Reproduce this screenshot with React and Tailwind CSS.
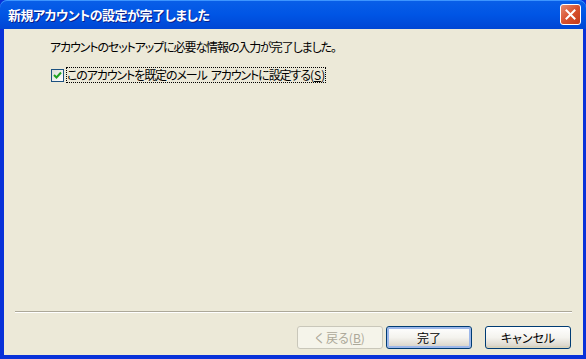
import React from "react";

const font = { fontFamily: '"Noto Sans CJK JP", "Liberation Sans", sans-serif', fontFeatureSettings: '"palt"' };

function XpButton({ children, disabled, isDefault, className = "" }) {
  if (disabled) {
    return (
      <div className={"h-[23px] w-[86px] rounded-[3px] border border-[#c9c7ba] bg-[#f5f4ea] flex items-center justify-center text-[12px] text-[#aca899] " + className}>
        {children}
      </div>
    );
  }
  return (
    <div className={"h-[23px] w-[86px] rounded-[3px] border border-[#003c74] flex items-center justify-center text-[12px] text-black bg-gradient-to-b from-[#ffffff] via-[#f4f3ee] to-[#d6d0c5] " + (isDefault ? "shadow-[inset_0_0_0_2px_#9cb7ea] " : "shadow-[inset_0_-2px_0_#d8d2bd] ") + className}>
      {children}
    </div>
  );
}

export default function App() {
  return (
    <div className="w-[586px] h-[359px] flex flex-col bg-[#0831d9] overflow-hidden" style={font}>
      <div className="h-[29px] shrink-0 flex items-center justify-between pl-[8px] pr-[5px] bg-gradient-to-b from-[#0a5fe8] via-[#0055e5] to-[#0046d4] rounded-t-[7px] shadow-[inset_0_1px_0_#3d95ff]">
        <span className="text-white font-bold text-[13px] leading-none tracking-[-0.5px] [text-shadow:1px_1px_0_#0a1e8c]">新規アカウントの設定が完了しました</span>
        <div className="w-[21px] h-[21px] rounded-[3px] border border-white bg-gradient-to-br from-[#e58a6e] via-[#d9512d] to-[#c23a1a] flex items-center justify-center">
          <svg width="11" height="11" viewBox="0 0 11 11">
            <path d="M1.5 1.5 L9.5 9.5 M9.5 1.5 L1.5 9.5" stroke="white" strokeWidth="2" strokeLinecap="square" />
          </svg>
        </div>
      </div>
      <div className="flex-1 mx-[3px] mb-[4px] ml-[4px] bg-[#ece9d8] flex flex-col">
        <div className="pl-[46px] pt-[11px] text-[12px] text-black leading-[14px] tracking-[-1.1px]">
          アカウントのセットアップに必要な情報の入力が完了しました。
        </div>
        <div className="pl-[47px] pt-[14px] flex items-center gap-[3px] text-[12px] leading-[14px]">
          <div className="w-[13px] h-[13px] border border-[#1c5180] bg-gradient-to-br from-[#dcdcd7] to-white flex items-center justify-center">
            <svg width="9" height="9" viewBox="0 0 9 9">
              <path d="M1 4 L3.5 6.5 L8 1.5" stroke="#21a121" strokeWidth="2" fill="none" />
            </svg>
          </div>
          <span className="outline outline-1 outline-dotted outline-black tracking-[-1.1px]">
            このアカウントを既定のメール<span className="ml-[4px]">アカウントに設定する</span><span className="tracking-normal">(<u>S</u>)</span>
          </span>
        </div>
        <div className="flex-1" />
        <div className="mx-[11px] h-[2px] border-t border-[#aca899] border-b border-b-white" />
        <div className="flex justify-end pr-[12px] pt-[13px] pb-[6px]">
          <XpButton disabled>く 戻る(<u>B</u>)</XpButton>
          <XpButton isDefault className="ml-[3px]">完了</XpButton>
          <XpButton className="ml-[13px]">キャンセル</XpButton>
        </div>
      </div>
    </div>
  );
}
